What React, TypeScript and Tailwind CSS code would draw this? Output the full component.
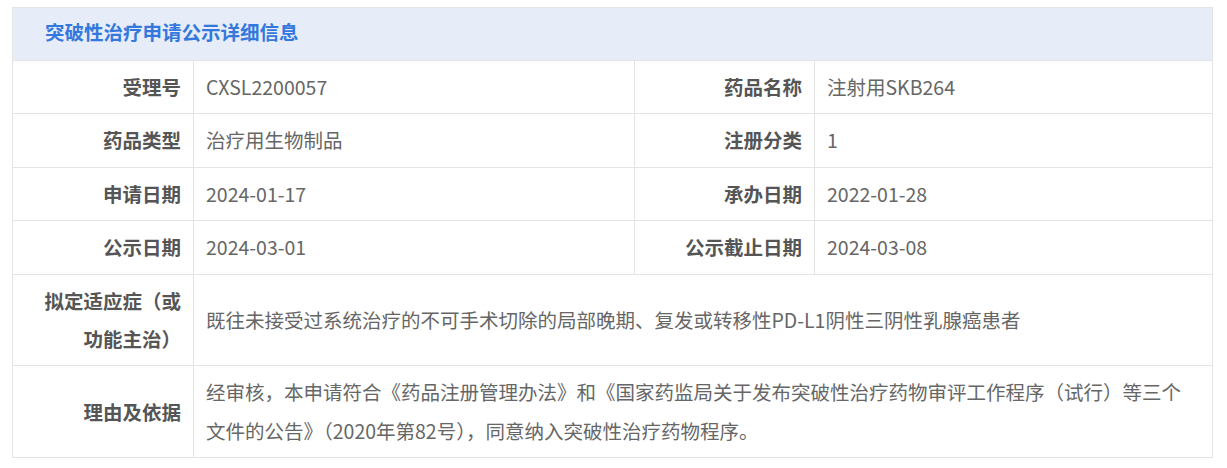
const rows: { label: string; value: string; label2: string; value2: string }[] = [
  { label: "受理号", value: "CXSL2200057", label2: "药品名称", value2: "注射用SKB264" },
  { label: "药品类型", value: "治疗用生物制品", label2: "注册分类", value2: "1" },
  { label: "申请日期", value: "2024-01-17", label2: "承办日期", value2: "2022-01-28" },
  { label: "公示日期", value: "2024-03-01", label2: "公示截止日期", value2: "2024-03-08" },
];

const labelCls =
  "border border-[#e4e4e4] px-3 py-[7px] text-right font-bold text-[#555] align-middle";
const valueCls =
  "border border-[#e4e4e4] px-3 py-[7px] text-left text-[#666] align-middle";

export default function App() {
  return (
    <div
      className="min-h-[468px] bg-white pl-3 pt-[7px] text-[19.5px] leading-[38.4px]"
      style={{ fontFamily: '"Microsoft YaHei", "Noto Sans CJK SC", "Noto Sans", sans-serif' }}
    >
      <table className="w-[1200px] table-fixed border-collapse border border-[#e4e4e4]">
        <colgroup>
          <col className="w-[181px]" />
          <col className="w-[441px]" />
          <col className="w-[180px]" />
          <col className="w-[398px]" />
        </colgroup>
        <thead>
          <tr>
            <th
              colSpan={4}
              className="h-[53px] border border-[#e4e4e4] bg-[#e6edf8] pb-[3px] pl-[32px] text-left"
            >
              <span className="text-[19.5px] font-bold text-[#3478de]">
                突破性治疗申请公示详细信息
              </span>
            </th>
          </tr>
        </thead>
        <tbody>
          {rows.map((r) => (
            <tr key={r.label}>
              <td className={labelCls}>{r.label}</td>
              <td className={valueCls}>{r.value}</td>
              <td className={labelCls}>{r.label2}</td>
              <td className={valueCls}>{r.value2}</td>
            </tr>
          ))}
          <tr>
            <td className={labelCls}>
              拟定适应症（或
              <br />
              功能主治）
            </td>
            <td colSpan={3} className={valueCls}>
              既往未接受过系统治疗的不可手术切除的局部晚期、复发或转移性PD-L1阴性三阴性乳腺癌患者
            </td>
          </tr>
          <tr>
            <td className={labelCls}>理由及依据</td>
            <td colSpan={3} className={valueCls}>
              经审核，本申请符合《药品注册管理办法》和《国家药监局关于发布突破性治疗药物审评工作程序（试行）等三个
              <br />
              文件的公告》（2020年第82号），同意纳入突破性治疗药物程序。
            </td>
          </tr>
        </tbody>
      </table>
    </div>
  );
}
